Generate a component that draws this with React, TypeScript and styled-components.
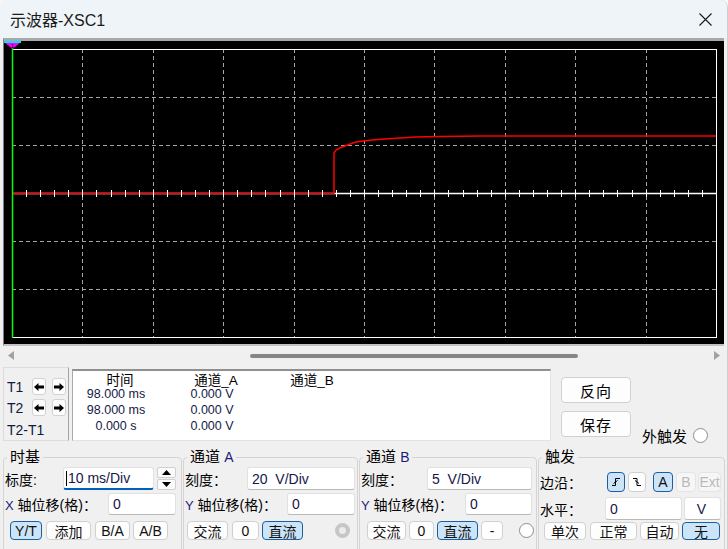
import styled, { createGlobalStyle, css } from "styled-components"

// ESTILO GLOBAL
const GlobalStyle = createGlobalStyle`
    * { box-sizing: border-box; }
    html, body {
        margin: 0;
        padding: 0;
        background: #f7f7f7;
    }
    body {
        font-family: "Liberation Sans", "Noto Sans CJK SC", sans-serif;
        color: #000;
    }
`

// JANELA E TITULO
const Janela = styled.div`
    width: 728px;
    height: 549px;
    background: #f0f0f0;
    border-radius: 8px 8px 0 0;
    border-right: 1px solid #cfcfcf;
    overflow: hidden;
    display: flex;
    flex-direction: column;
`
const BarraTitulo = styled.div`
    flex: none;
    height: 38px;
    background: #eef4f7;
    display: flex;
    align-items: center;
    justify-content: space-between;
    padding: 0 15px 0 10px;
`
const Titulo = styled.span`
    font-size: 16px;
    color: #1b1b1b;
`

// TELA DO OSCILOSCOPIO
const Tela = styled.div`
    flex: none;
    height: 308px;
    margin: 0 3px;
    background: #000;
    border-top: 3px solid #a9a9a9;
    border-left: 1px solid #7d7d7d;
    border-bottom: 2px solid #c2c2c2;

    svg { display: block; }
`

// BARRA DE ROLAGEM
const BarraRolagem = styled.div`
    flex: none;
    height: 19px;
    display: flex;
    align-items: center;
    padding: 0 7px 0 8px;
`
const Trilho = styled.div`
    flex: 1;
    display: flex;
    align-items: center;
`
const Polegar = styled.div`
    margin-left: 236px;
    width: 328px;
    height: 4px;
    border-radius: 2px;
    background: #868686;
`

// FAIXA DO MEIO: CURSORES, LEITURA, BOTOES
const Meio = styled.div`
    flex: none;
    height: 78px;
    display: flex;
    align-items: flex-start;
    padding-left: 3px;
`
const PainelCursor = styled.div`
    margin-top: 2px;
    width: 66px;
    height: 74px;
    border: 1px solid #dcdcdc;
    border-right-color: #a3a3a3;
    padding: 10px 0 0 3px;
    display: grid;
    grid-template-columns: 19px 14px 14px;
    grid-template-rows: 17px 17px 1fr;
    column-gap: 6px;
    row-gap: 4px;
    align-items: center;
    font-size: 14px;
`
const RotuloCursor = styled.span<{ $largo?: boolean }>`
    color: #10183e;
    ${p => p.$largo && css`
        grid-column: 1 / -1;
    `}
`
const SetaCursor = styled.div`
    height: 17px;
    background: #fdfdfd;
    border: 1px solid #d2d2d2;
    border-radius: 3px;
    display: flex;
    align-items: center;
    justify-content: center;
`
const Leitura = styled.div`
    margin: 4px 0 0 3px;
    width: 479px;
    height: 72px;
    background: #fff;
    border-top: 2px solid #8f8f8f;
    border-left: 1px solid #a9a9a9;
    border-right: 1px solid #e3e3e3;
    border-bottom: 1px solid #e3e3e3;
    display: grid;
    grid-template-columns: 86px 106px 86px;
    grid-template-rows: 15px 16px 16px 16px;
    align-items: center;
    justify-items: center;
`
const Celula = styled.span<{ $cab?: boolean }>`
    font-size: 12.5px;
    color: #141a48;
    white-space: pre;
    ${p => p.$cab && css`
        font-size: 13.5px;
        color: #000;
        padding-left: 8px;
    `}
`
const ColunaBotoes = styled.div`
    margin: 12px 0 0 10px;
    display: flex;
    flex-direction: column;
    gap: 8px;
`
const BotaoGrande = styled.button`
    width: 70px;
    height: 26px;
    padding: 0;
    font: inherit;
    font-size: 15px;
    letter-spacing: 1px;
    color: #000;
    background: #fdfdfd;
    border: 1px solid #d0d0d0;
    border-radius: 4px;
`
const GatilhoExterno = styled.div`
    align-self: flex-end;
    margin: 0 0 0 11px;
    height: 16px;
    display: flex;
    align-items: center;
    gap: 6px;
    font-size: 15px;
`

// GRUPOS DE CONTROLE
const Grupos = styled.div`
    flex: none;
    height: 110px;
    display: flex;
    gap: 1px;
    padding: 5px 0 0 3px;
`
const Grupo = styled.fieldset<{ $w: number; $pr: number }>`
    width: ${p => p.$w}px;
    min-width: 0;
    margin: 0;
    padding: 1px ${p => p.$pr}px 0 1px;
    border: 1px solid #d4d4d4;
    border-radius: 4px;
`
const Legenda = styled.legend`
    font-size: 15px;
    line-height: 18px;
    padding: 0 3px;
    margin-left: 2px;
`
const Latim = styled.span`
    color: #1c1c78;
    font-size: 0.93em;
`
const Linha = styled.div<{ $h: number; $mt: number }>`
    height: ${p => p.$h}px;
    margin-top: ${p => p.$mt}px;
    display: flex;
    align-items: center;
    justify-content: space-between;
`
const LinhaBotoes = styled.div<{ $h: number; $mt: number; $pl: number }>`
    height: ${p => p.$h}px;
    margin-top: ${p => p.$mt}px;
    padding-left: ${p => p.$pl}px;
    display: flex;
    align-items: center;
    gap: 3px;
`
const Rotulo = styled.span`
    font-size: 14px;
    white-space: nowrap;
`
const Campos = styled.div<{ $gap?: number }>`
    height: 100%;
    display: flex;
    gap: ${p => p.$gap ?? 2}px;
`
const Campo = styled.div<{ $w: number; $foco?: boolean }>`
    width: ${p => p.$w}px;
    height: 100%;
    background: #fff;
    border: 1px solid #e1e1e1;
    border-bottom-color: #b9b9b9;
    border-radius: 3px;
    padding-left: 4px;
    display: flex;
    align-items: center;
    font-size: 14px;
    color: #16164a;
    white-space: pre;
    ${p => p.$foco && css`
        border-bottom: 2px solid #005fb8;
        padding-left: 2px;
    `}
`
const Cursor = styled.span`
    width: 1px;
    height: 15px;
    background: #000;
    margin-right: 1px;
`
const Spin = styled.div`
    width: 19px;
    height: 100%;
    display: flex;
    flex-direction: column;
    gap: 1px;
`
const SpinBotao = styled.div`
    flex: 1;
    background: #fbfbfb;
    border: 1px solid #d0d0d0;
    border-radius: 2px;
    display: flex;
    align-items: center;
    justify-content: center;
`
const Botao = styled.button<{ $w: number; $ativo?: boolean; $off?: boolean; $ml?: number }>`
    width: ${p => p.$w}px;
    height: 100%;
    margin-left: ${p => p.$ml ?? 0}px;
    padding: 0;
    font: inherit;
    font-size: 14px;
    color: #111;
    background: #fdfdfd;
    border: 1px solid #d0d0d0;
    border-radius: 4px;
    display: flex;
    align-items: center;
    justify-content: center;
    ${p => p.$ativo && css`
        background: #cce4f7;
        border-color: #1a5fa0;
    `}
    ${p => p.$off && css`
        color: #b9b9b9;
        background: #f6f6f6;
        border-color: #e4e4e4;
    `}
`
const GrupoBotoes = styled.div`
    height: 20px;
    display: flex;
    gap: 3px;
`
const Radio = styled.span<{ $cinza?: boolean; $mr?: number }>`
    flex: none;
    width: 15px;
    height: 15px;
    margin-left: auto;
    margin-right: ${p => p.$mr ?? 0}px;
    border-radius: 50%;
    background: #fff;
    border: 1px solid #8d8d8d;
    ${p => p.$cinza && css`
        border: 4px solid #c6c6c6;
        background: #ececec;
    `}
`

// GRAFICO DA TELA
const X0 = 8
const X1 = 712
const Y0 = 8
const Y1 = 296
const DX = (X1 - X0) / 10
const DY = (Y1 - Y0) / 6
const YC = Y0 + DY * 3

const curva: [number, number][] = [
    [330, 112], [332, 109], [336, 107], [341, 105], [346, 103], [352, 101],
    [360, 100], [368, 99], [381, 98], [396, 97], [411, 96], [436, 95.5],
    [476, 95], [712, 95],
]

function Grafico() {
    const verticais = Array.from({ length: 9 }, (_, i) => Math.round(X0 + DX * (i + 1)) + 0.5)
    const horizontais = [1, 2, 4, 5].map(j => Y0 + DY * j + 0.5)
    const marcas = Array.from({ length: 49 }, (_, i) => Math.round(X0 + (DX / 5) * (i + 1)) + 0.5)
    const traco = `M${X0} ${YC + 0.5} H330 ` + curva.map(([x, y]) => `L${x} ${y}`).join(" ")

    return (
        <svg width={721} height={303}>
            {verticais.map(x => (
                <line key={x} x1={x} y1={Y0} x2={x} y2={Y1} stroke="#a5a5a5" strokeDasharray="4 3" />
            ))}
            {horizontais.map(y => (
                <line key={y} x1={X0} y1={y} x2={X1} y2={y} stroke="#a5a5a5" strokeDasharray="4 3" />
            ))}
            <line x1={X0} y1={Y0 + 0.5} x2={X1} y2={Y0 + 0.5} stroke="#fff" />
            <line x1={X0} y1={Y1 + 0.5} x2={X1} y2={Y1 + 0.5} stroke="#fff" />
            <line x1={X1 + 0.5} y1={Y0} x2={X1 + 0.5} y2={Y1 + 1} stroke="#fff" />
            <line x1={X0} y1={YC + 0.5} x2={X1} y2={YC + 0.5} stroke="#fff" strokeWidth={1.5} />
            <path d={traco} fill="none" stroke="#ff0000" strokeWidth={1.5} />
            {marcas.map(x => (
                <line key={x} x1={x} y1={YC - 3} x2={x} y2={YC + 4} stroke="#fff" />
            ))}
            <line x1={X0 + 0.5} y1={Y0 - 1} x2={X0 + 0.5} y2={Y1 + 1} stroke="#00ff00" strokeWidth={1.5} />
            <polygon points="0,1 17,1 8.5,8" fill="#ff00ff" />
            <rect x={0} y={0} width={17} height={2} fill="#00e5ff" />
            <text x={8.5} y={6.5} fontSize={6} textAnchor="middle" fill="#000" fontFamily="Liberation Sans, sans-serif">1</text>
        </svg>
    )
}

// ICONES
function SetaEsquerda() {
    return (
        <svg width="10" height="8" viewBox="0 0 10 8">
            <polygon points="0,4 4.5,0 4.5,2.5 10,2.5 10,5.5 4.5,5.5 4.5,8" fill="#000" />
        </svg>
    )
}
function SetaDireita() {
    return (
        <svg width="10" height="8" viewBox="0 0 10 8">
            <polygon points="10,4 5.5,0 5.5,2.5 0,2.5 0,5.5 5.5,5.5 5.5,8" fill="#000" />
        </svg>
    )
}
function Subida() {
    return (
        <svg width="10" height="10" viewBox="0 0 10 10" fill="none" stroke="#000" strokeWidth="1">
            <path d="M1 8.5 H4.5 V1.5 H9" />
            <path d="M2.5 6.5 L6.5 3.5" />
        </svg>
    )
}
function Descida() {
    return (
        <svg width="10" height="10" viewBox="0 0 10 10" fill="none" stroke="#000" strokeWidth="1">
            <path d="M1 1.5 H5 V8.5 H9" />
            <path d="M3 3.5 L7 6.5" />
        </svg>
    )
}

function Osciloscopio() {
    return (
        <Janela>
            <BarraTitulo>
                <Titulo>示波器-XSC1</Titulo>
                <svg width="13" height="13" viewBox="0 0 13 13" stroke="#1a1a1a" strokeWidth="1.1">
                    <path d="M0.5 0.5 L12.5 12.5 M12.5 0.5 L0.5 12.5" />
                </svg>
            </BarraTitulo>

            <Tela>
                <Grafico />
            </Tela>

            <BarraRolagem>
                <svg width="6" height="9" viewBox="0 0 6 9"><polygon points="0,4.5 6,0 6,9" fill="#a2a2a2" /></svg>
                <Trilho><Polegar /></Trilho>
                <svg width="6" height="9" viewBox="0 0 6 9"><polygon points="6,4.5 0,0 0,9" fill="#a2a2a2" /></svg>
            </BarraRolagem>

            <Meio>
                <PainelCursor>
                    <RotuloCursor>T1</RotuloCursor>
                    <SetaCursor><SetaEsquerda /></SetaCursor>
                    <SetaCursor><SetaDireita /></SetaCursor>
                    <RotuloCursor>T2</RotuloCursor>
                    <SetaCursor><SetaEsquerda /></SetaCursor>
                    <SetaCursor><SetaDireita /></SetaCursor>
                    <RotuloCursor $largo>T2-T1</RotuloCursor>
                </PainelCursor>

                <Leitura>
                    <Celula $cab>时间</Celula>
                    <Celula $cab>通道_A</Celula>
                    <Celula $cab>通道_B</Celula>
                    <Celula>98.000 ms</Celula>
                    <Celula>0.000 V</Celula>
                    <Celula />
                    <Celula>98.000 ms</Celula>
                    <Celula>0.000 V</Celula>
                    <Celula />
                    <Celula>0.000 s</Celula>
                    <Celula>0.000 V</Celula>
                    <Celula />
                </Leitura>

                <ColunaBotoes>
                    <BotaoGrande>反向</BotaoGrande>
                    <BotaoGrande>保存</BotaoGrande>
                </ColunaBotoes>

                <GatilhoExterno>
                    外触发
                    <Radio />
                </GatilhoExterno>
            </Meio>

            <Grupos>
                <Grupo $w={179} $pr={5}>
                    <Legenda>时基</Legenda>
                    <Linha $h={23} $mt={0}>
                        <Rotulo>标度:</Rotulo>
                        <Campos $gap={3}>
                            <Campo $w={91} $foco><Cursor />10 ms/Div</Campo>
                            <Spin>
                                <SpinBotao>
                                    <svg width="9" height="5" viewBox="0 0 9 5"><polygon points="0,5 4.5,0 9,5" fill="#000" /></svg>
                                </SpinBotao>
                                <SpinBotao>
                                    <svg width="9" height="5" viewBox="0 0 9 5"><polygon points="0,0 4.5,5 9,0" fill="#000" /></svg>
                                </SpinBotao>
                            </Spin>
                        </Campos>
                    </Linha>
                    <Linha $h={22} $mt={3}>
                        <Rotulo><Latim>X</Latim> 轴位移(格)：</Rotulo>
                        <Campo $w={68}>0</Campo>
                    </Linha>
                    <LinhaBotoes $h={19} $mt={6} $pl={5}>
                        <Botao $w={32} $ativo>Y/T</Botao>
                        <Botao $w={45} $ml={1}>添加</Botao>
                        <Botao $w={35} $ml={1}>B/A</Botao>
                        <Botao $w={35}>A/B</Botao>
                    </LinhaBotoes>
                </Grupo>

                <Grupo $w={175} $pr={2}>
                    <Legenda>通道 <Latim>A</Latim></Legenda>
                    <Linha $h={23} $mt={0}>
                        <Rotulo>刻度：</Rotulo>
                        <Campo $w={108}>20  V/Div</Campo>
                    </Linha>
                    <Linha $h={22} $mt={3}>
                        <Rotulo><Latim>Y</Latim> 轴位移(格)：</Rotulo>
                        <Campo $w={68}>0</Campo>
                    </Linha>
                    <LinhaBotoes $h={19} $mt={6} $pl={2}>
                        <Botao $w={41}>交流</Botao>
                        <Botao $w={27} $ml={1}>0</Botao>
                        <Botao $w={41} $ativo>直流</Botao>
                        <Radio $cinza $mr={5} />
                    </LinhaBotoes>
                </Grupo>

                <Grupo $w={178} $pr={4}>
                    <Legenda>通道 <Latim>B</Latim></Legenda>
                    <Linha $h={23} $mt={0}>
                        <Rotulo>刻度：</Rotulo>
                        <Campo $w={105}>5  V/Div</Campo>
                    </Linha>
                    <Linha $h={22} $mt={3}>
                        <Rotulo><Latim>Y</Latim> 轴位移(格)：</Rotulo>
                        <Campo $w={67}>0</Campo>
                    </Linha>
                    <LinhaBotoes $h={19} $mt={6} $pl={6}>
                        <Botao $w={39}>交流</Botao>
                        <Botao $w={25}>0</Botao>
                        <Botao $w={41} $ativo>直流</Botao>
                        <Botao $w={22}>-</Botao>
                        <Radio $mr={-2} />
                    </LinhaBotoes>
                </Grupo>

                <Grupo $w={187} $pr={3}>
                    <Legenda>触发</Legenda>
                    <Linha $h={20} $mt={5}>
                        <Rotulo>边沿：</Rotulo>
                        <GrupoBotoes>
                            <Botao $w={18} $ativo><Subida /></Botao>
                            <Botao $w={18}><Descida /></Botao>
                            <Botao $w={20} $ativo $ml={4}>A</Botao>
                            <Botao $w={20} $off>B</Botao>
                            <Botao $w={23} $off $ml={-1}>Ext</Botao>
                        </GrupoBotoes>
                    </Linha>
                    <Linha $h={23} $mt={5}>
                        <Rotulo>水平：</Rotulo>
                        <Campos>
                            <Campo $w={77}>0</Campo>
                            <Campo $w={37}>  V</Campo>
                        </Campos>
                    </Linha>
                    <LinhaBotoes $h={18} $mt={2} $pl={4}>
                        <Botao $w={42}>单次</Botao>
                        <Botao $w={47} $ml={1}>正常</Botao>
                        <Botao $w={39}>自动</Botao>
                        <Botao $w={38} $ativo>无</Botao>
                    </LinhaBotoes>
                </Grupo>
            </Grupos>
        </Janela>
    )
}

export default function App() {
    return (
        <>
            <GlobalStyle />
            <Osciloscopio />
        </>
    )
}
